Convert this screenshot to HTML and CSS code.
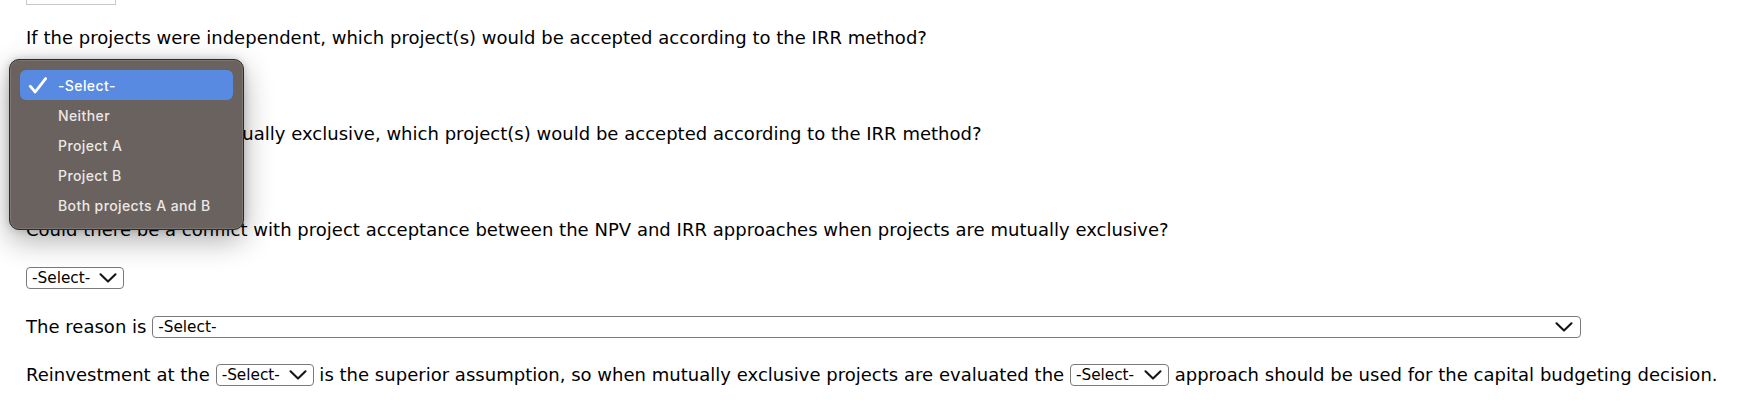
FILE: index.html
```html
<!DOCTYPE html>
<html lang="en">
<head>
<meta charset="utf-8">
<title>IRR questions</title>
<link rel="stylesheet" href="styles.css">
</head>
<body>
<div class="page">
  <div class="topbox"></div>

  <p class="line">If the projects were independent, which project(s) would be accepted according to the IRR method?</p>
  <div class="line"><span class="select sm"><span class="sel-text">-Select-</span><svg class="chev" viewBox="0 0 18 10" width="18" height="10"><polyline points="1.5,1.3 9,8.6 16.5,1.3"/></svg></span></div>

  <p class="line">If the projects were mutually exclusive, which project(s) would be accepted according to the IRR method?</p>
  <div class="line"><span class="select sm"><span class="sel-text">-Select-</span><svg class="chev" viewBox="0 0 18 10" width="18" height="10"><polyline points="1.5,1.3 9,8.6 16.5,1.3"/></svg></span></div>

  <p class="line">Could there be a conflict with project acceptance between the NPV and IRR approaches when projects are mutually exclusive?</p>
  <div class="line"><span class="select sm"><span class="sel-text">-Select-</span><svg class="chev" viewBox="0 0 18 10" width="18" height="10"><polyline points="1.5,1.3 9,8.6 16.5,1.3"/></svg></span></div>

  <p class="line reason">The reason is <span class="select wide"><span class="sel-text">-Select-</span><svg class="chev" viewBox="0 0 18 10" width="18" height="10"><polyline points="1.5,1.3 9,8.6 16.5,1.3"/></svg></span></p>

  <p class="line">Reinvestment at the <span class="select sm"><span class="sel-text">-Select-</span><svg class="chev" viewBox="0 0 18 10" width="18" height="10"><polyline points="1.5,1.3 9,8.6 16.5,1.3"/></svg></span> is the superior assumption, so when mutually exclusive projects are evaluated the <span class="select sm2"><span class="sel-text">-Select-</span><svg class="chev" viewBox="0 0 18 10" width="18" height="10"><polyline points="1.5,1.3 9,8.6 16.5,1.3"/></svg></span> approach should be used for the capital budgeting decision.</p>
</div>

<div class="popup">
  <div class="opt active">
    <svg class="check" viewBox="0 0 20 17" width="20" height="17"><path d="M2.2 9.2 L7.2 15 L17.6 1.6"/></svg>
    <span>-Select-</span>
  </div>
  <div class="opt"><span>Neither</span></div>
  <div class="opt"><span>Project A</span></div>
  <div class="opt"><span>Project B</span></div>
  <div class="opt"><span>Both projects A and B</span></div>
</div>
</body>
</html>
```

FILE: styles.css
```css
html, body {
  margin: 0;
  padding: 0;
  background: #ffffff;
}

body {
  font-family: "DejaVu Sans", Verdana, sans-serif;
  font-size: 18px;
  letter-spacing: 0.02px;
  color: #000;
  width: 1748px;
  height: 410px;
  overflow: hidden;
  position: relative;
}

.page {
  padding-left: 26px;
}

.topbox {
  width: 90px;
  height: 5px;
  box-sizing: border-box;
  border: 1px solid #c9c9c9;
  border-top: none;
}

.line {
  margin: 26px 0 0 0;
  line-height: 22px;
  height: 22px;
  white-space: nowrap;
}

.topbox + .line {
  margin-top: 22px;
}

.line.reason {
  margin-top: 27px;
}

.select {
  display: inline-flex;
  align-items: center;
  justify-content: space-between;
  box-sizing: border-box;
  height: 22px;
  vertical-align: top;
  border: 1px solid #7a7a7a;
  border-radius: 4px;
  padding: 0 6px 0 5px;
  font-size: 15.3px;
  letter-spacing: 0;
  line-height: 20px;
  color: #000;
  background: #fff;
}

.select.sm { width: 98px; }
.select.sm2 { width: 99px; }
.select.wide { width: 1429px; padding-right: 7px; }

.sel-text {
  display: block;
}

.chev {
  display: block;
  width: 18px;
  height: 10px;
}

.chev polyline {
  fill: none;
  stroke: #151515;
  stroke-width: 2.1;
  stroke-linecap: round;
  stroke-linejoin: round;
}

.popup {
  position: absolute;
  left: 9px;
  top: 59px;
  width: 235px;
  height: 171px;
  box-sizing: border-box;
  padding: 10px;
  background: #6a625f;
  border: 1px solid #2f2b2a;
  border-radius: 10px;
  box-shadow: inset 0 0 0 1px rgba(255, 255, 255, 0.12), 0 10px 30px rgba(0, 0, 0, 0.32), 0 0 8px rgba(0, 0, 0, 0.18);
  font-family: Inter, "Noto Sans", sans-serif;
  font-size: 14px;
  font-weight: 500;
  letter-spacing: 0.4px;
  color: #ede8e5;
}

.opt {
  position: relative;
  height: 30px;
  display: flex;
  align-items: center;
  padding-left: 38px;
  border-radius: 6px;
}

.opt.active {
  background: #578ae0;
  color: #ffffff;
}

.check {
  position: absolute;
  left: 8px;
  top: 7px;
  width: 20px;
  height: 17px;
}

.check path {
  fill: none;
  stroke: #ffffff;
  stroke-width: 2.8;
  stroke-linecap: round;
  stroke-linejoin: round;
}
```
